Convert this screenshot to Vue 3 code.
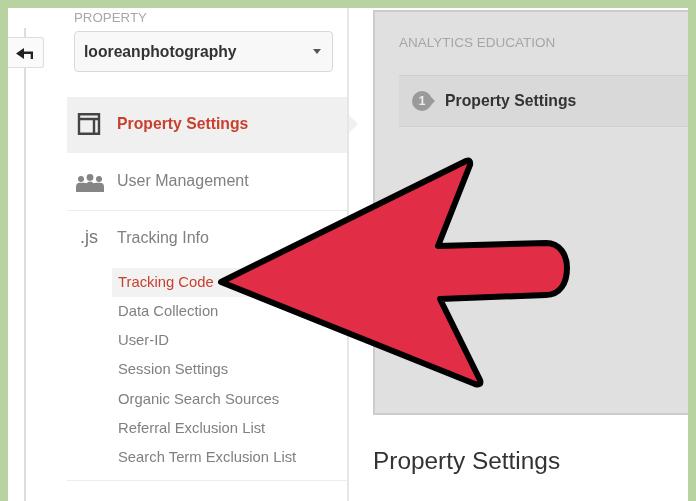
<script setup>
const links = [
  "Tracking Code",
  "Data Collection",
  "User-ID",
  "Session Settings",
  "Organic Search Sources",
  "Referral Exclusion List",
  "Search Term Exclusion List",
];
</script>

<template>
  <div class="frame">
    <div class="page">
      <aside class="rail">
        <button class="back">
          <svg width="20" height="14" viewBox="0 0 20 14">
            <path d="M1 7.5 9 2V5.5H18V13H15.7V8H9V13Z" fill="#222" />
          </svg>
        </button>
      </aside>

      <nav class="nav">
        <div class="prop-label">PROPERTY</div>
        <div class="select">
          <span>looreanphotography</span>
          <i class="caret"></i>
        </div>

        <div class="row row-active">
          <svg class="ico" width="24" height="24" viewBox="0 0 24 24">
            <path d="M2 2.2H22V21.8H2ZM2 7H22M17 7V21.8" fill="none" stroke="#444" stroke-width="2.4" />
          </svg>
          <span>Property Settings</span>
          <i class="pointer"></i>
        </div>

        <div class="row row-user">
          <svg class="ico" width="28" height="18" viewBox="0 0 28 18">
            <circle cx="5" cy="5" r="3" fill="#858585" />
            <circle cx="14" cy="3.4" r="3.4" fill="#858585" />
            <circle cx="23" cy="5" r="3" fill="#858585" />
            <path d="M0 18V13Q0 8.8 4 8.8H8Q9.5 8.8 10.5 9.3Q12 7.6 14 7.6Q16 7.6 17.5 9.3Q18.5 8.8 20 8.8H24Q28 8.8 28 13V18Z" fill="#858585" />
          </svg>
          <span>User Management</span>
        </div>

        <div class="row row-track">
          <span class="js">.js</span>
          <span>Tracking Info</span>
        </div>

        <ul class="links">
          <li v-for="(link, i) in links" :key="link" :class="{ on: i === 0 }">{{ link }}</li>
        </ul>
      </nav>

      <main class="main">
        <section class="edu">
          <div class="edu-title">ANALYTICS EDUCATION</div>
          <div class="step">
            <span class="num">1</span>
            <b>Property Settings</b>
          </div>
        </section>
        <h1>Property Settings</h1>
      </main>
    </div>

    <svg class="arrow" width="696" height="501" viewBox="0 0 696 501">
      <path
        d="M221 282 466 161Q471 159 470 165L438 246 546 243C560 243 567 255 567 268C567 283 560 295 546 295L440 299 480 380Q482 386 475 384Z"
        fill="#e12d45"
        stroke="#000"
        stroke-width="6"
        stroke-linejoin="round"
      />
    </svg>
  </div>
</template>

<style scoped>
.frame {
  height: 501px;
  box-sizing: border-box;
  padding: 8px 8px 0;
  background: #b9d3a0;
  font-family: "Liberation Sans", Arial, sans-serif;
  overflow: hidden;
}

.page {
  display: flex;
  height: 100%;
  background: #fff;
  filter: blur(0.4px);
}

.rail {
  width: 59px;
  flex: none;
  padding-top: 29px;
  box-sizing: border-box;
  background: linear-gradient(#ddd, #ddd) 16px 20px / 2px 100% no-repeat;
}

.back {
  display: flex;
  align-items: center;
  justify-content: center;
  width: 36px;
  height: 31px;
  padding: 0 2px 0 0;
  background: #fafafa;
  border: 1px solid #ddd;
  border-left: none;
  border-radius: 0 3px 3px 0;
}

.nav {
  width: 282px;
  flex: none;
  box-sizing: border-box;
  border-right: 2px solid #e6e6e6;
}

.prop-label {
  height: 23px;
  margin-left: 7px;
  padding-top: 3px;
  box-sizing: border-box;
  font-size: 13.3px;
  line-height: 14px;
  color: #a8a8a8;
}

.select {
  display: flex;
  align-items: center;
  justify-content: space-between;
  width: 259px;
  height: 41px;
  box-sizing: border-box;
  margin-left: 7px;
  padding: 0 12px 0 9px;
  border: 1.5px solid #d8d8d8;
  border-radius: 4px;
  background: #f8f8f8;
  font-size: 15.7px;
  font-weight: 700;
  color: #333;
}

.caret {
  width: 0;
  height: 0;
  margin-right: -1px;
  border: 4.5px solid transparent;
  border-top: 5px solid #555;
  border-bottom: none;
}

.row {
  position: relative;
  display: flex;
  align-items: center;
  box-sizing: border-box;
  height: 57px;
  font-size: 16px;
  color: #808080;
}

.row-active {
  height: 56px;
  margin-top: 25px;
  padding: 0 0 2px 10px;
  background: #f0f0f0;
  font-weight: 700;
  font-size: 15.75px;
  color: #c8412f;
}

.row-active .ico {
  margin-right: 16px;
}

.pointer {
  position: absolute;
  right: -11px;
  top: 18px;
  width: 0;
  height: 0;
  border-left: 9px solid #f0f0f0;
  border-top: 9px solid transparent;
  border-bottom: 9px solid transparent;
}

.row-user {
  padding: 0 0 2px 9px;
  border-bottom: 1px solid #ececec;
  height: 58px;
}

.row-user .ico {
  margin: 4px 13px 0 0;
}

.row-track {
  height: 55px;
  padding: 0 0 2px 13px;
}

.js {
  width: 37px;
  font-size: 18px;
  color: #777;
}

.links {
  margin: 1.5px 0 0;
  padding: 0 0 7.5px 45px;
  list-style: none;
  border-bottom: 1px solid #ececec;
  font-size: 14.8px;
  color: #808080;
}

.links li {
  height: 29.3px;
  line-height: 29.3px;
  padding-left: 6px;
}

.links li.on {
  background: #f2f2f2;
  color: #c8412f;
}

.main {
  flex: 1;
  min-width: 0;
  padding: 2px 0 0 24px;
}

.edu {
  height: 405px;
  box-sizing: border-box;
  padding: 22px 0 0 24px;
  background: #e0e0e0;
  border: solid #cbcbcb;
  border-width: 2px 0 2px 2px;
}

.edu-title {
  font-size: 13.5px;
  line-height: 18px;
  color: #a6a6a6;
}

.step {
  display: flex;
  align-items: center;
  height: 52px;
  margin-top: 23px;
  padding-left: 13px;
  background: #d9d9d9;
  border-top: 1.5px solid #cfcfcf;
  border-bottom: 1.5px solid #cfcfcf;
  box-sizing: border-box;
  font-size: 15.75px;
  color: #333;
}

.num {
  position: relative;
  display: flex;
  align-items: center;
  justify-content: center;
  width: 20px;
  height: 20px;
  margin-right: 13px;
  border-radius: 50%;
  background: #9a9a9a;
  color: #eee;
  font-size: 12px;
  font-weight: 700;
}

.num::after {
  content: "";
  position: absolute;
  right: -3px;
  top: 5px;
  border-left: 5px solid #9a9a9a;
  border-top: 5px solid transparent;
  border-bottom: 5px solid transparent;
}

h1 {
  margin: 31px 0 0;
  font-size: 24.4px;
  line-height: 30px;
  font-weight: 400;
  color: #333;
}

.arrow {
  position: absolute;
  left: 0;
  top: 0;
}
</style>

<style>
body {
  margin: 0;
}
</style>
